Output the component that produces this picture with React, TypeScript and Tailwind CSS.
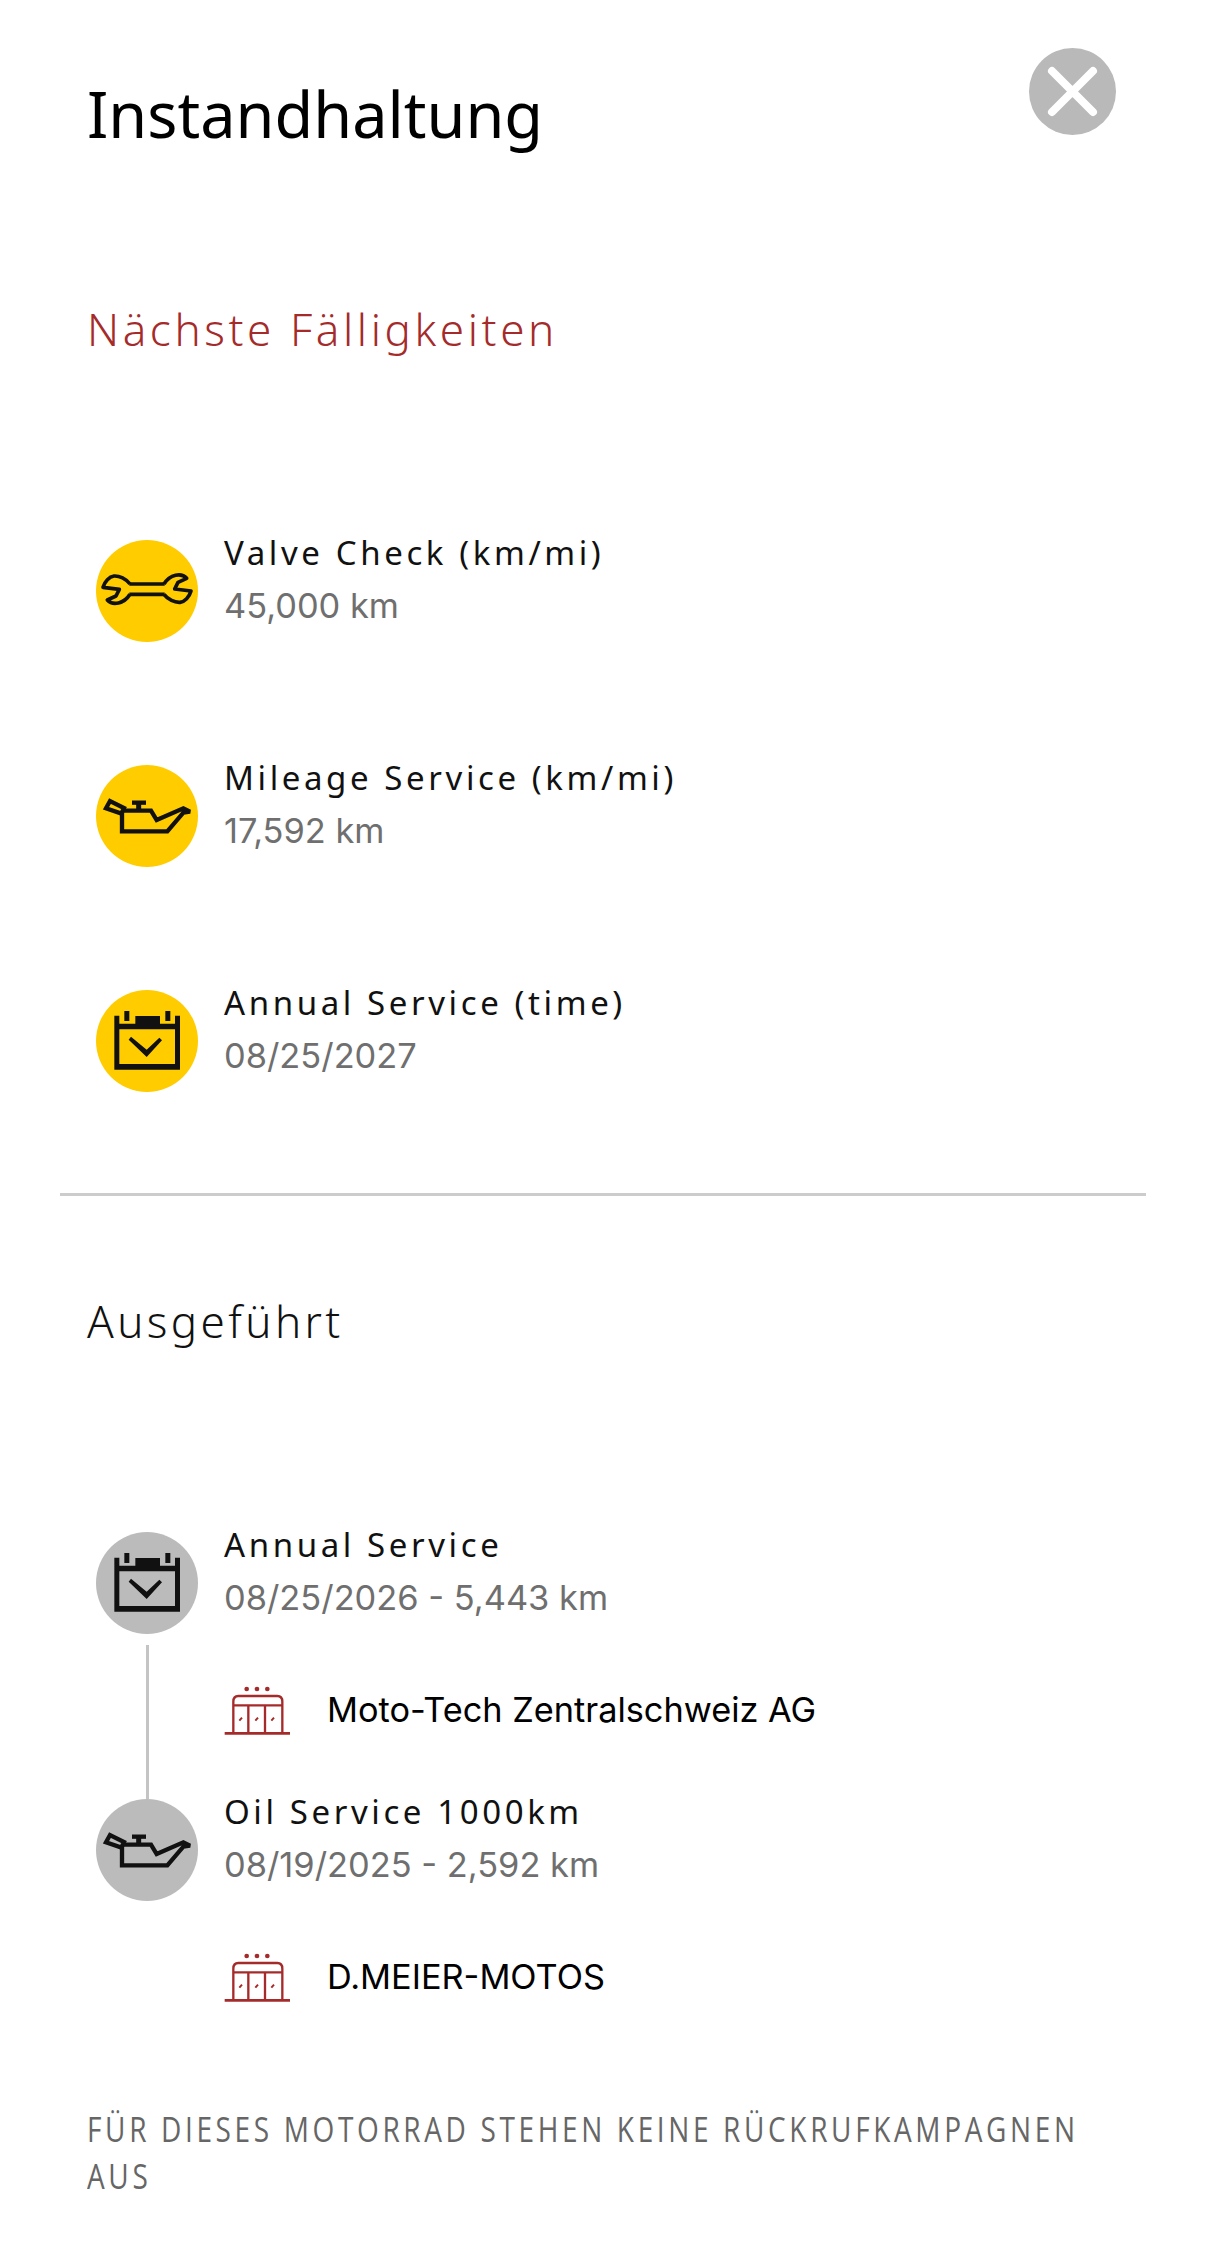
import type { ReactNode } from "react";

const headFont = "font-['Noto_Sans','Open_Sans',sans-serif]";
const bodyFont = "font-['Inter','Liberation_Sans',sans-serif]";

function WrenchIcon() {
  const d = "M102 72 C90 56 70 47 54 48 C40 50 26 64 21 82 L70 88 L60 108 L34 120 C50 138 84 132 102 103";
  return (
    <svg viewBox="0 0 306 306" className="w-[102px] h-[102px]">
      <g transform="translate(0 60)" fill="none" stroke="#111" strokeWidth="11" strokeLinejoin="round">
        <path d={d} />
        <path d={d} transform="rotate(180 153 87.5)" />
        <path d="M100 72H206M100 103H206" />
      </g>
    </svg>
  );
}

function OilIcon() {
  return (
    <svg viewBox="0 0 306 306" className="w-[102px] h-[102px]">
      <g transform="translate(0 75)" fill="none" stroke="#111" strokeWidth="13" strokeLinejoin="miter" strokeMiterlimit="2">
        <path d="M30 55L42 33L84 54L76 71Z" />
        <path d="M78 68V124H214L262 68L282 65L262 55L182 90L165 62H82" />
        <path d="M108 38H150" strokeWidth="13" />
        <path d="M128 38V60" strokeWidth="15" />
      </g>
    </svg>
  );
}

function BatteryIcon() {
  return (
    <svg viewBox="0 0 306 306" className="w-[102px] h-[102px]">
      <g transform="translate(30 45)" fill="#111">
        <path d="M25 32H40V56H88V33H162V56H207V32H222V194H25ZM40 73V177H207V73Z" fillRule="evenodd" />
        <rect x="55" y="18" width="15" height="30" />
        <rect x="178" y="18" width="15" height="30" />
        <path d="M68 104L75 95L122 134L160 98L168 106L122 156Z" />
      </g>
    </svg>
  );
}

function DealerIcon() {
  return (
    <svg viewBox="0 0 222 180" className="w-[74px] h-[60px] shrink-0">
      <g fill="none" stroke="#a52b2b" strokeWidth="7">
        <path d="M40 160V65Q40 48 55 48H172Q187 48 187 65V160" />
        <path d="M40 76H187M85 76V160M135 76V160" />
        <path d="M14 160H210" strokeWidth="8" />
        <path d="M58 122L66 113M106 122L114 113M154 122L162 113" strokeWidth="6" />
      </g>
      <g fill="#a52b2b">
        <circle cx="80" cy="27" r="7" />
        <circle cx="111" cy="27" r="7" />
        <circle cx="142" cy="27" r="7" />
      </g>
    </svg>
  );
}

function Badge({ done, children }: { done?: boolean; children: ReactNode }) {
  return (
    <div className={done ? "w-[102px] h-[102px] rounded-full bg-[#bbbbbb] shrink-0" : "w-[102px] h-[102px] rounded-full bg-[#ffcc00] shrink-0"}>
      {children}
    </div>
  );
}

function ItemText({ title, sub }: { title: string; sub: string }) {
  return (
    <div className="flex flex-col">
      <div className={`${headFont} text-[33px] leading-[44px] tracking-[3.6px] text-[#111]`}>{title}</div>
      <div className={`${bodyFont} text-[34.4px] leading-[50px] mt-[6px] text-[#6f6f6f]`}>{sub}</div>
    </div>
  );
}

function Due({ icon, title, sub }: { icon: ReactNode; title: string; sub: string }) {
  return (
    <div className="flex gap-[26px] h-[225px]">
      <Badge>{icon}</Badge>
      <div className="-mt-[9px]">
        <ItemText title={title} sub={sub} />
      </div>
    </div>
  );
}

function Done({ icon, title, sub, vendor, line }: { icon: ReactNode; title: string; sub: string; vendor: string; line?: boolean }) {
  return (
    <div className="flex gap-[26px] h-[267px]">
      <div className="flex flex-col items-center w-[102px] shrink-0">
        <Badge done>{icon}</Badge>
        {line && <div className="w-[3px] flex-1 mt-[11px] bg-[#c4c4c4]" />}
      </div>
      <div className="flex flex-col -mt-[9px]">
        <ItemText title={title} sub={sub} />
        <div className="flex items-center gap-[33px] mt-[57px] -ml-[4px]">
          <DealerIcon />
          <span className={`${bodyFont} text-[34.3px] leading-[44px] text-black`}>{vendor}</span>
        </div>
      </div>
    </div>
  );
}

export default function App() {
  return (
    <div className="w-[1206px] h-[2248px] bg-white overflow-hidden">
      <div className="flex justify-between pl-[87px] pr-[90px] pt-[48px]">
        <h1 className={`${headFont} text-[63px] leading-[86px] text-black mt-[23px]`}>Instandhaltung</h1>
        <button className="w-[87px] h-[87px] rounded-full bg-[#b9b9b9] flex items-center justify-center">
          <svg viewBox="0 0 87 87" className="w-[87px] h-[87px]">
            <path d="M23 23L64 64M64 23L23 64" stroke="#fff" strokeWidth="8" strokeLinecap="round" fill="none" />
          </svg>
        </button>
      </div>

      <h2 className={`${headFont} font-light text-[44px] leading-[60px] tracking-[3.6px] text-[#a52b2b] pl-[87px] mt-[142px]`}>Nächste Fälligkeiten</h2>

      <div className="pl-[96px] mt-[181px]">
        <Due icon={<WrenchIcon />} title="Valve Check (km/mi)" sub="45,000 km" />
        <Due icon={<OilIcon />} title="Mileage Service (km/mi)" sub="17,592 km" />
        <Due icon={<BatteryIcon />} title="Annual Service (time)" sub="08/25/2027" />
      </div>

      <div className="mx-[60px] h-[3px] bg-[#cccccc] -mt-[22px]" />

      <h2 className={`${headFont} font-light text-[44px] leading-[60px] tracking-[3.4px] text-[#111] pl-[87px] mt-[95px]`}>Ausgeführt</h2>

      <div className="pl-[96px] mt-[181px]">
        <Done icon={<BatteryIcon />} title="Annual Service" sub="08/25/2026 - 5,443 km" vendor="Moto-Tech Zentralschweiz AG" line />
        <Done icon={<OilIcon />} title="Oil Service 1000km" sub="08/19/2025 - 2,592 km" vendor="D.MEIER-MOTOS" />
      </div>

      <p className="font-['Open_Sans',sans-serif] font-medium text-[35px] leading-[47px] tracking-[4.55px] text-[#666666] ml-[87px] mt-[39px] w-[1290px] origin-left scale-x-[0.8]">
        FÜR DIESES MOTORRAD STEHEN KEINE RÜCKRUFKAMPAGNEN AUS
      </p>
    </div>
  );
}
